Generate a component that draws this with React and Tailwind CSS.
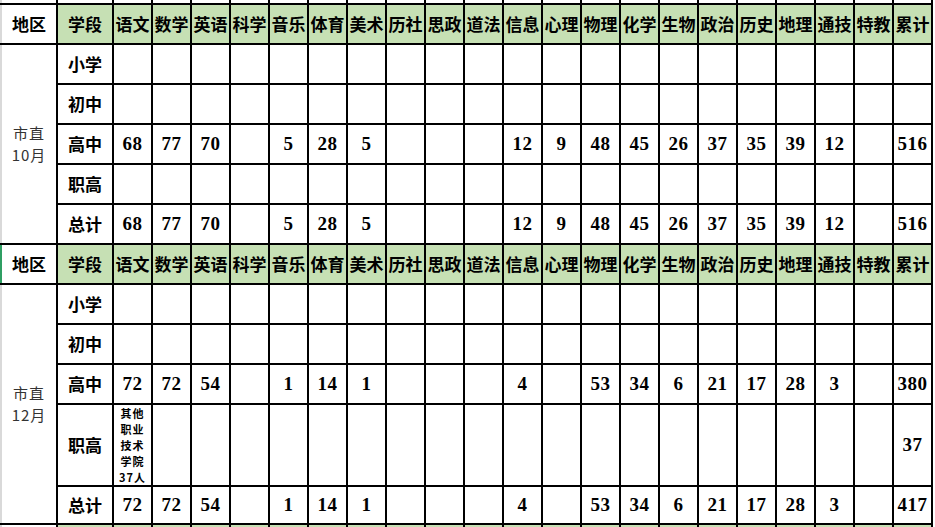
import React from 'react';

const subjects = ['语文', '数学', '英语', '科学', '音乐', '体育', '美术', '历社', '思政', '道法', '信息', '心理', '物理', '化学', '生物', '政治', '历史', '地理', '通技', '特教', '累计'];

const empty = Array(21).fill('');
const t1Gao = [68, 77, 70, '', 5, 28, 5, '', '', '', 12, 9, 48, 45, 26, 37, 35, 39, 12, '', 516];
const t2Gao = [72, 72, 54, '', 1, 14, 1, '', '', '', 4, '', 53, 34, 6, 21, 17, 28, 3, '', 380];
const t2Zong = [72, 72, 54, '', 1, 14, 1, '', '', '', 4, '', 53, 34, 6, 21, 17, 28, 3, '', 417];

const cjk = "font-['Noto_Sans_CJK_SC',sans-serif]";
const num = "font-['Liberation_Serif','Noto_Sans_CJK_SC',serif]";

function HeaderRow({ edge }) {
  return (
    <>
      <div className={`bg-white border-l-2 ${edge} flex items-center justify-center text-[17px] font-bold text-black ${cjk}`}>地区</div>
      <div className={`bg-[#c6e0b4] flex items-center justify-center text-[17px] font-bold text-black ${cjk}`}>学段</div>
      {subjects.map((s) => (
        <div key={s} className={`bg-[#c6e0b4] flex items-center justify-center text-[17px] font-bold text-black whitespace-nowrap ${cjk}`}>
          {s}
        </div>
      ))}
    </>
  );
}

function DataRow({ label, values }) {
  return (
    <>
      <div className={`bg-white flex items-center justify-center text-[17px] font-bold text-black ${cjk}`}>{label}</div>
      {values.map((v, i) => (
        <div key={i} className={`bg-white flex items-center justify-center text-[19px] font-bold tracking-[0.5px] text-black ${num}`}>
          {v}
        </div>
      ))}
    </>
  );
}

function Region({ month }) {
  return (
    <div className={`row-span-5 bg-white border-l-2 border-[#d9d9d9] flex flex-col items-center justify-center text-[15px] leading-[22px] tracking-[1px] text-[#333] ${cjk}`}>
      <span>市直</span>
      <span>{month}</span>
    </div>
  );
}

export default function App() {
  return (
    <div className="w-[935px] h-[527px] bg-white overflow-hidden">
      <div className="w-[933px] grid gap-[2px] bg-black grid-cols-[56px_54px_repeat(21,37px)] grid-rows-[3px_38px_38px_38px_38px_38px_38px_38px_38px_38px_38px_80px_36px_2px]">
        {/* partial row above */}
        <div className="bg-white border-l-2 border-[#d9d9d9]" />
        {Array(22).fill(0).map((_, i) => (
          <div key={'top' + i} className="bg-white" />
        ))}

        <HeaderRow edge="border-[#d9d9d9]" />
        <Region month="10月" />
        <DataRow label="小学" values={empty} />
        <DataRow label="初中" values={empty} />
        <DataRow label="高中" values={t1Gao} />
        <DataRow label="职高" values={empty} />
        <DataRow label="总计" values={t1Gao} />

        <HeaderRow edge="border-[#2f9e63]" />
        <Region month="12月" />
        <DataRow label="小学" values={empty} />
        <DataRow label="初中" values={empty} />
        <DataRow label="高中" values={t2Gao} />

        {/* 职高 row with note */}
        <div className={`bg-white flex items-center justify-center text-[17px] font-bold text-black ${cjk}`}>职高</div>
        <div className={`bg-white flex flex-col items-center justify-center text-[11px] leading-[16px] tracking-[1px] font-bold text-black ${cjk}`}>
          <span>其他</span>
          <span>职业</span>
          <span>技术</span>
          <span>学院</span>
          <span>37人</span>
        </div>
        {Array(19).fill(0).map((_, i) => (
          <div key={'zg' + i} className="bg-white" />
        ))}
        <div className={`bg-white flex items-center justify-center text-[19px] font-bold tracking-[0.5px] text-black ${num}`}>37</div>

        <DataRow label="总计" values={t2Zong} />

        {/* partial row below */}
        <div className="bg-white border-l-2 border-[#d9d9d9]" />
        {Array(22).fill(0).map((_, i) => (
          <div key={'bot' + i} className="bg-[#c6e0b4]" />
        ))}
      </div>
    </div>
  );
}
